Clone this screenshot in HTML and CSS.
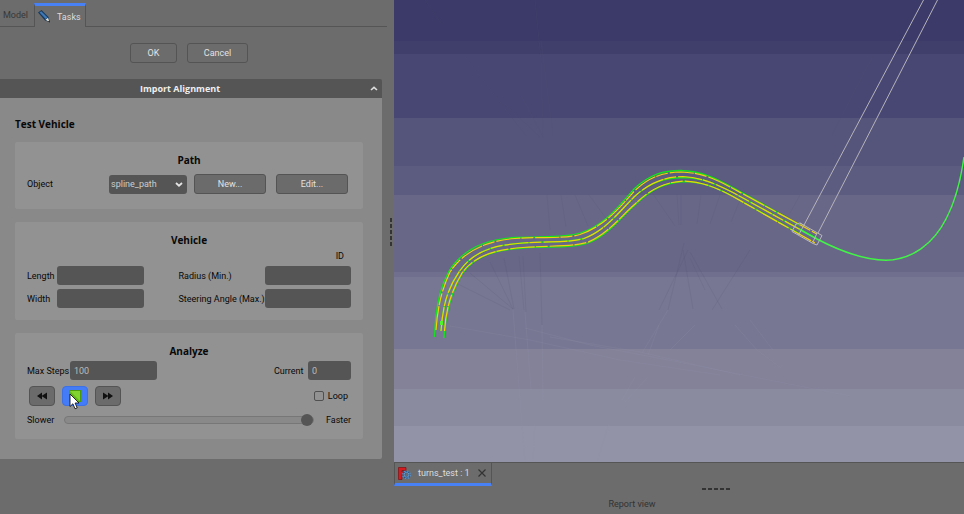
FILE: index.html
```html
<!DOCTYPE html>
<html lang="en">
<head>
<meta charset="utf-8">
<title>turns_test</title>
<link rel="stylesheet" href="styles.css">
</head>
<body>
<main class="app">
  <aside class="dock">
    <nav class="tabs">
      <button class="tab" type="button">Model</button>
      <button class="tab tab-active" type="button">
        <svg class="pencil" viewBox="0 0 12 13"><path d="M0 2.500 3.500 0 10.500 7 11.800 12.300 7 10.500Z" fill="#173a5e"/><path d="M1.500 2.500 3.200 1.300 9.500 7.500 7.700 9Z" fill="#3f79b5"/><path d="M7.500 9.800 10 7.800 11.500 12Z" fill="#e8e2d0"/><path d="M10 11.400 11.300 10.400 12 12.500Z" fill="#111"/></svg>
        Tasks
      </button>
      <span class="tab-fill"></span>
    </nav>
    <div class="dialog-buttons">
      <button class="btn flat ok" type="button">OK</button>
      <button class="btn flat cancel" type="button">Cancel</button>
    </div>
    <section class="panel">
      <header class="panel-head">
        <h1>Import Alignment</h1>
        <button class="collapse" type="button" aria-label="Collapse"><svg viewBox="0 0 8 5"><path d="M1 4 4 1.300 7 4" fill="none" stroke="#ddd" stroke-width="1.600"/></svg></button>
      </header>
      <div class="panel-body">
        <h2 class="title">Test Vehicle</h2>
        <section class="group">
          <h3>Path</h3>
          <div class="row path-row">
            <label class="path-label" for="object">Object</label>
            <span class="combo">
              <select id="object"><option>spline_path</option></select>
              <svg viewBox="0 0 8 5"><path d="M1 1 4 3.700 7 1" fill="none" stroke="#e4e4e4" stroke-width="1.800"/></svg>
            </span>
            <button class="btn" type="button">New...</button>
            <button class="btn edit" type="button">Edit...</button>
          </div>
        </section>
        <section class="group">
          <h3>Vehicle</h3>
          <p class="vehicle-id">ID</p>
          <div class="fields">
            <label for="length">Length</label><input class="field" id="length" type="text">
            <label class="second" for="radius">Radius (Min.)</label><input class="field" id="radius" type="text">
            <label for="width">Width</label><input class="field" id="width" type="text">
            <label class="second" for="angle">Steering Angle (Max.)</label><input class="field" id="angle" type="text">
          </div>
        </section>
        <section class="group">
          <h3>Analyze</h3>
          <div class="row steps-row">
            <label for="steps">Max Steps</label><input class="field steps" id="steps" type="text" value="100">
            <label class="push" for="current">Current</label><input class="field current" id="current" type="text" value="0">
          </div>
          <div class="row play-row">
            <button class="btn play" type="button" aria-label="Step back"><svg viewBox="0 0 10 8"><path d="M5 .5V7.500L0 4ZM10 .5V7.500L4.500 4Z" fill="#111"/></svg></button>
            <button class="btn play stop" type="button" aria-label="Stop">
              <svg class="square" viewBox="0 0 12 12"><path d="M0 0H12V12H0Z" fill="#4c9a10"/><path d="M1 1H11V11H1Z" fill="#5fb516"/><path d="M1 1H11V11Z" fill="#83d32f"/></svg>
              <svg class="pointer" viewBox="0 0 11 17"><path d="M1 1V13.500L3.900 10.800 6 15.800 8.200 14.900 6.100 10H10Z" fill="#fff" stroke="#151515" stroke-width=".9"/></svg>
            </button>
            <button class="btn play" type="button" aria-label="Step forward"><svg viewBox="0 0 10 8"><path d="M0 .5V7.500L5.500 4ZM5 .5V7.500L10 4Z" fill="#111"/></svg></button>
            <label class="loop push"><input type="checkbox">Loop</label>
          </div>
          <div class="row speed-row">
            <label for="speed">Slower</label>
            <input class="speed" id="speed" type="range" min="0" max="100" value="100">
            <span class="faster">Faster</span>
          </div>
        </section>
      </div>
    </section>
    <i class="grip grip-side"></i>
  </aside>
  <section class="work">
    <svg class="viewport" viewBox="394 0 570 462" preserveAspectRatio="none" fill="none">
      <g shape-rendering="crispEdges">
        <path d="M394 0H964V42H394Z" fill="#3b3a68"/><path d="M394 41H964V54H394Z" fill="#403f6c"/>
        <path d="M394 54H964V118H394Z" fill="#484774"/><path d="M394 118H964V166H394Z" fill="#55547b"/>
        <path d="M394 166H964V195H394Z" fill="#5c5b80"/><path d="M394 195H964V272H394Z" fill="#686788"/>
        <path d="M394 272H964V277H394Z" fill="#706f8e"/><path d="M394 277H964V349H394Z" fill="#787793"/>
        <path d="M394 349H964V389H394Z" fill="#838299"/><path d="M394 389H964V426H394Z" fill="#8b8ba0"/>
        <path d="M394 426H964V462H394Z" fill="#9393a7"/>
      </g>
      <g stroke="#4f4e70" stroke-opacity=".16">
        <path d="M425 0 441 23M463 54 527 137M493 93 540 137M521 95 543 137M535 0 541 60 543 137M541 40 553 135M547 195 550 230M561 195 566 227M575 195 588 226M589 195 608 221M653 194 675 226M677 195 679 225M681 195 681 225M701 195 697 224M720 195 710 224M740 200 731 222M874 54 852 96 831 137M800 195 790 213"/>
        <path d="M456 283 510 310M470 273 513 309M490 262 513 309M504 258 514 309M519 256 524 310M523 256 526 312M540 253 542 325M684 243 668 310M688 250 659 310M690 252 722 309M690 258 705 290M750 250 712 310M683 250 693 309"/>
      </g>
      <g stroke="#9291a8" stroke-opacity=".2">
        <path d="M450 326 530 340 620 360 720 375M525 328 590 345 668 360 850 396M550 337 640 352 740 375M513 310 516 349 525 462M525 312 531 390M542 325 543 400M535 420 533 462M668 310 642 353M659 325 648 355M695 325 670 350M735 325 757 350 781 368M750 320 773 350M635 377 622 400M648 377 625 402M610 420 597 462"/>
      </g>
      <g stroke-width="1.300" stroke="#12e51b">
        <path d="M434.500 337C436 300 442 284 449 271C463 249 486 239 515 237.500C543 236 565 238 580 233C604 226 619 206 634 189C650 174 664 170.500 681 170.500C703 171 719 180 733 187.500L800 225"/>
        <path d="M441 331C443 302 449 286 460 270.500C474 251 494 245 523 243C550 241 568 243 584 238.500C605 231 620 211 634 197C650 182 665 178 683 177.500C703 177.500 718 185 733 192.500L817 238.500"/>
        <path d="M444 338C446 308 453 289 462 274C475 255 496 250 523 248C550 246 570 249 587 243.500C608 236 622 216 635 205C651 189 665 182.500 684 181.500C703 181.500 719 189 733 196.500L800 234"/>
      </g>
      <g stroke-width="1.200" stroke="#f0d408" stroke-dasharray="24 1 12 2">
        <path d="M436 330C438 301 444 285 450 272C464 251 486 241 515 238.500C543 236.500 565 239 580 234.500C605 226 620 207 634 191.500C650 176 664 172.500 681 172C703 172.500 719 181 733 188.500L817 234"/>
        <path d="M441 331C443 302 449 286 460 270.500C474 251 494 245 523 243C550 241 568 243 584 238.500C605 231 620 211 634 197C650 182 665 177 683 176.500C703 177.500 718 185 733 192.500L800 229.500"/>
        <path d="M444.500 331C446 306 453 288 462 273C475 255 496 249.500 523 247.500C550 245.500 570 247 587 242.500C607 235 621 216 635 204C651 188.500 665 182 684 181C703 181.500 719 189 733 196.500L815 243"/>
      </g>
      <path d="M440 321H443V325H440Z" fill="#4df52b"/>
      <path d="M799 229 817 239C842 252 865 260 886 260.300C912 260 934 243 946 219C956 200 961 178 964 157" stroke="#41f445" stroke-width="1.500"/>
      <g stroke="#b9b8bd" stroke-width="1">
        <path d="M923.500 0 803.500 226M937.500 0 818 233" stroke="#b5b4ba"/>
        <path d="M796 224 800 223 822 235.500 817 245 813 243.500M796 224 792 231.500 813 243.500M803.500 226 798.500 235M817 233 813 242M800 223 804 225.500"/>
      </g>
    </svg>
    <nav class="documents">
      <button class="document" type="button">
        <svg class="app-logo" viewBox="0 0 13 13"><path d="M.5 .5H8V3.500H4V5H7V7.500H4V12.500H.5Z" fill="#d51a20" stroke="#7c1014" stroke-width=".7"/><circle cx="8.500" cy="7.800" r="2.800" fill="none" stroke="#28527f" stroke-width="2.200"/><circle cx="8.500" cy="7.800" r="3.800" fill="none" stroke="#5b92c9" stroke-width="1.200" stroke-dasharray="1.700 1.280"/><circle cx="8.500" cy="7.800" r="2.400" fill="none" stroke="#6ea4d8" stroke-width=".9"/></svg>
        <span>turns_test : 1</span>
        <svg class="close" viewBox="0 0 8 8"><path d="M.5 .5 7.500 7.500M7.500 .5 .5 7.500" stroke="#333" stroke-width="1.200"/></svg>
      </button>
    </nav>
    <div class="report">
      <i class="grip grip-bottom"></i>
      <p>Report view</p>
    </div>
  </section>
</main>
</body>
</html>
```
FILE: styles.css
```css
* { box-sizing: border-box; }

body {
  margin: 0;
  background: #6c6c6c;
  color: #080808;
  font: 9px/12px Roboto, "Liberation Sans", sans-serif;
}

h1, h2, h3, p { margin: 0; }

h1, h2, h3 { font: bold 10px/14px "Open Sans", "Noto Sans", sans-serif; }

button, input, select { font: inherit; color: inherit; margin: 0; }

svg { display: block; flex: none; }

.app {
  display: grid;
  grid-template-columns: 394px 1fr;
  min-height: 100vh;
}

.dock { position: relative; }

.tabs {
  display: flex;
  height: 27px;
  padding: 3px 7px 0 0;
}

.tab {
  width: 34px;
  padding: 3px;
  border: 0;
  border-bottom: 1px solid #555;
  background: none;
  color: #383838;
  text-align: left;
}

.tab-active {
  display: flex;
  align-items: center;
  gap: 7px;
  width: 52px;
  padding: 0 3px;
  border: 1px solid #555;
  border-top: 3px solid #4880f6;
  border-bottom: 0;
  color: #ddd;
}

.tab-fill { flex: 1; border-bottom: 1px solid #555; }

.pencil { width: 12px; height: 13px; }

.dialog-buttons {
  display: flex;
  justify-content: center;
  gap: 10px;
  padding: 16px 16px 16px 0;
}

.btn {
  height: 20px;
  padding: 0;
  border: 1px solid #545454;
  border-radius: 3px;
  background: #6b6b6b;
  color: #e2e2e2;
}

.flat { background: none; }
.ok { width: 47px; }
.cancel { width: 61px; }

.panel { margin-right: 12px; }

.panel-head {
  display: flex;
  align-items: center;
  height: 19px;
  padding-right: 4px;
  border-radius: 0 2px 0 0;
  background: #555;
  color: #eee;
}

.panel-head h1 { flex: 1; padding-right: 10px; font-size: 9px; text-align: center; }

.collapse { padding: 0; border: 0; background: none; }
.collapse svg, .combo svg { width: 8px; height: 5px; }

.panel-body {
  display: grid;
  gap: 13px;
  padding: 19px 19px 20px 15px;
  border-radius: 0 0 2px 0;
  background: #898989;
}

.title { margin-bottom: -2px; }

.group {
  padding: 11px 12px;
  border-radius: 2px;
  background: #929292;
}

.group h3 { text-align: center; }

.row { display: flex; align-items: center; }

.path-row { gap: 7px; padding: 7px 3px 4px 0; }
.path-row .btn { width: 72px; }
.path-row .edit { margin-left: 3px; }
.path-label { flex: 1; }

.combo { position: relative; width: 78px; }

.combo select {
  display: block;
  width: 100%;
  height: 19px;
  padding: 0 2px;
  border: 0;
  border-radius: 3px;
  appearance: none;
  background: #555;
  color: #ccc;
}

.combo svg { position: absolute; top: 7px; right: 4px; pointer-events: none; }

.vehicle-id { padding: 3px 7px 4px 0; text-align: right; }

.fields {
  display: grid;
  grid-template-columns: 30px 1fr 121px 1fr;
  align-items: center;
  row-gap: 4px;
  padding-bottom: 1px;
}

.second { padding-left: 35px; white-space: nowrap; }

.field {
  width: 100%;
  height: 19px;
  padding: 0 4px;
  border: 0;
  border-radius: 3px;
  background: #555;
  color: #bbb;
}

.steps-row { padding-top: 3px; }
.steps-row label { width: 43px; white-space: nowrap; }
.steps-row .steps { width: 87px; }
.steps-row .current { width: 43px; }
.steps-row .push { width: 34px; }
.push { margin-left: auto; }

.play-row { gap: 7px; padding: 6px 3px 4px 2px; }

.play {
  display: flex;
  align-items: center;
  justify-content: center;
  position: relative;
  width: 26px;
  border-radius: 4px;
}

.play svg { width: 10px; height: 8px; }
.stop { border-color: #3b71e4; background: #447cf8; }
.play .square { width: 12px; height: 12px; }
.play .pointer { position: absolute; top: 6px; left: 6px; width: 11px; height: 17px; }

.loop { display: flex; align-items: center; gap: 4px; }

.loop input {
  width: 10px;
  height: 10px;
  border: 1px solid #505050;
  border-radius: 2px;
  appearance: none;
}

.speed-row { padding: 3px 0 2px; }
.speed-row label { width: 37px; }

.speed {
  flex: 1;
  height: 13px;
  appearance: none;
  background: none;
}

.speed::-webkit-slider-runnable-track {
  height: 8px;
  border: 1px solid #777;
  border-radius: 4px;
  background: #898989;
}

.speed::-webkit-slider-thumb {
  width: 12px;
  height: 12px;
  margin-top: -3px;
  border-radius: 50%;
  appearance: none;
  background: #555;
}

.faster { width: 37px; padding-left: 12px; }

.grip { display: block; position: absolute; }

.grip-side {
  top: 218px;
  right: 2px;
  width: 2px;
  height: 29px;
  background: repeating-linear-gradient(#333 0 4px, transparent 4px 6px);
}

.work { display: flex; flex-direction: column; min-width: 0; }

.viewport { width: 100%; flex: 1; min-height: 0; }

.documents { height: 24px; border-top: 1px solid #555; }

.document {
  display: flex;
  align-items: center;
  width: 98px;
  height: 23px;
  padding: 0 5px 0 3px;
  border: 1px solid #555;
  border-top: 0;
  border-bottom: 3px solid #4880f6;
  background: none;
  color: #ddd;
}

.document span { flex: 1; padding-left: 7px; text-align: left; }
.app-logo { width: 13px; height: 13px; }
.close { width: 8px; height: 8px; }

.report {
  position: relative;
  height: 28px;
  padding: 12px 94px 4px 0;
  color: #333;
  text-align: center;
}

.grip-bottom {
  top: 2px;
  left: 308px;
  width: 29px;
  height: 2px;
  background: repeating-linear-gradient(90deg, #333 0 4px, transparent 4px 6px);
}
```
